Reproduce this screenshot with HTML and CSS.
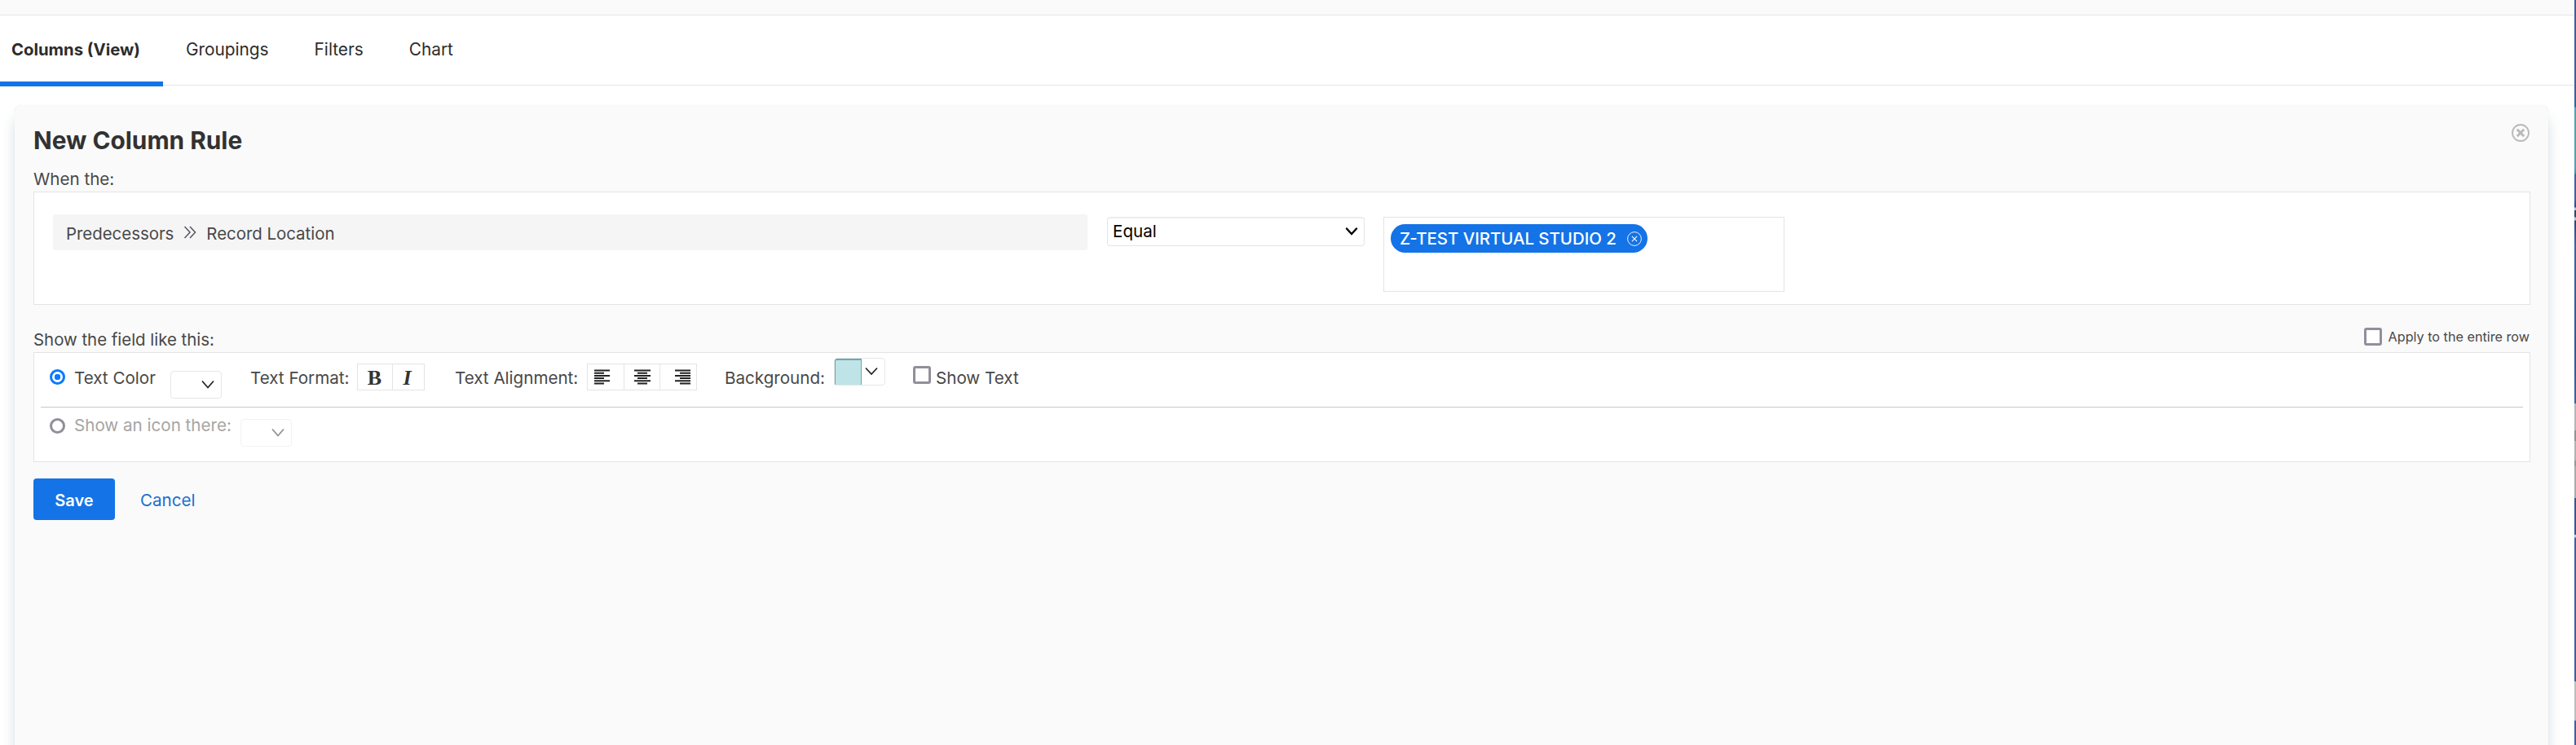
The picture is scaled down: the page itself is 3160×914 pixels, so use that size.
FILE: index.html
```html
<!DOCTYPE html>
<html lang="en">
<head>
    <meta charset="UTF-8">
    <title>New Column Rule</title>
    <link rel="stylesheet" href="styles.css">
</head>
<body>
  <div class="page">
    <div class="topbar"></div>
    <nav class="tabs">
      <a class="tab active">Columns (View)</a>
      <a class="tab">Groupings</a>
      <a class="tab">Filters</a>
      <a class="tab">Chart</a>
    </nav>

    <div class="card">
      <div class="card-header">
        <h2>New Column Rule</h2>
        <svg class="close" width="22" height="22" viewBox="0 0 22 22" fill="none" stroke="#b9b9b9">
          <circle cx="11" cy="11" r="10" stroke-width="1.8"/>
          <path d="M6.8 6.8l8.4 8.4M15.2 6.8l-8.4 8.4" stroke-width="3"/>
        </svg>
      </div>

      <div class="section-label">When the:</div>
      <div class="box condition">
        <div class="field">
          <span>Predecessors</span>
          <svg width="16" height="16" viewBox="0 0 16 16" fill="none" stroke="#55555f" stroke-width="1.5">
            <path d="M1.5 1l6.5 7-6.5 7M8 1l6.5 7L8 15"/>
          </svg>
          <span>Record Location</span>
        </div>
        <div class="select">
          <span>Equal</span>
          <svg width="16" height="12" viewBox="0 0 16 12" fill="none" stroke="#000" stroke-width="2.4" stroke-linecap="round">
            <path d="M2 2.5l6 6.5 6-6.5"/>
          </svg>
        </div>
        <div class="tokens">
          <div class="token">
            <span>Z-TEST VIRTUAL STUDIO 2</span>
            <svg width="18" height="18" viewBox="0 0 18 18" fill="none" stroke="#fff">
              <circle cx="9" cy="9" r="8.4" stroke-width="0.9"/>
              <path d="M5.9 5.9l6.2 6.2M12.1 5.9l-6.2 6.2" stroke-width="1.1"/>
            </svg>
          </div>
        </div>
      </div>

      <div class="section-row">
        <div class="section-label">Show the field like this:</div>
        <label class="apply"><span class="checkbox"></span>Apply to the entire row</label>
      </div>
      <div class="box format">
        <div class="format-row">
          <span class="radio checked"></span>
          <span class="label color-label">Text Color</span>
          <div class="dropdown low">
            <svg width="16" height="12" viewBox="0 0 16 12" fill="none" stroke="#222" stroke-width="1.7"><path d="M1 1.5l7 8 7-8"/></svg>
          </div>
          <span class="label format-label">Text Format:</span>
          <div class="btn-group">
            <span class="btn bold">B</span>
            <span class="btn italic">I</span>
          </div>
          <span class="label align-label">Text Alignment:</span>
          <div class="btn-group">
            <span class="btn al-left">
              <svg width="20" height="19" viewBox="0 0 20 19" stroke="#222" stroke-width="2"><path d="M0 1.5h19M0 4.7h12M0 7.9h19M0 11.1h12M0 14.3h19M0 17.5h12"/></svg>
            </span>
            <span class="btn al-center">
              <svg width="20" height="19" viewBox="0 0 20 19" stroke="#222" stroke-width="2"><path d="M0 1.5h20M4 4.7h12M0 7.9h20M4 11.1h12M0 14.3h20M4 17.5h12"/></svg>
            </span>
            <span class="btn al-right">
              <svg width="20" height="19" viewBox="0 0 20 19" stroke="#222" stroke-width="2"><path d="M1 1.5h19M7 4.7h13M1 7.9h19M7 11.1h13M1 14.3h19M7 17.5h13"/></svg>
            </span>
          </div>
          <span class="label bg-label">Background:</span>
          <div class="dropdown high">
            <span class="swatch"></span>
            <svg width="16" height="12" viewBox="0 0 16 12" fill="none" stroke="#222" stroke-width="1.7"><path d="M1 1.5l7 7.5 7-7.5"/></svg>
          </div>
          <span class="checkbox text-check"></span>
          <span class="label">Show Text</span>
        </div>
        <div class="format-row disabled">
          <span class="radio"></span>
          <span class="label icon-label">Show an icon there:</span>
          <div class="dropdown">
            <svg width="16" height="12" viewBox="0 0 16 12" fill="none" stroke="#222" stroke-width="1.7"><path d="M1 1.5l7 8 7-8"/></svg>
          </div>
        </div>
      </div>

      <div class="actions">
        <button class="save">Save</button>
        <a class="cancel">Cancel</a>
      </div>
    </div>
  </div>
  <div class="edge"></div>
</body>
</html>
```
FILE: styles.css
```css
* {
box-sizing: border-box;
}

body {
margin: 0;
display: flex;
height: 100vh;
overflow: hidden;
background-color: #fff;
font-family: Inter, sans-serif;
font-size: 20.6px;
line-height: 24px;
color: #484848;
}

svg {
display: block;
flex: none;
}

.page {
flex: 1;
display: flex;
flex-direction: column;
overflow: hidden;
}

/* strip of the desktop behind the window */
.edge {
width: 2px;
background: linear-gradient(#3b609b 0 120px, #2169a0 131px, #4fa3b5 132px 206px, #3f8fa5 213px, #3c62a3 214px 245px, #2d4677 254px, #b9c2d0 255px 258px, #2d4677 258px 266px, #b9c2d0 267px 270px, #2d4677 271px, #3b63a5 300px, #30589a 430px, #3c62a5 495px, #b7b5b5 495px 528px, #929292 528px 541px, #b3b1b1 541px 565px, #989898 565px 572px, #aaa 572px 611px, #335693 611px 656px, #c4ccd8 656px 659px, #3b609f 660px 836px, #bdbdbd 836px 884px, #3b609f 884px);
}

.topbar {
height: 19px;
flex: none;
background-color: #fafafa;
border-bottom: 1px solid #e6e6e6;
}

.tabs {
display: flex;
height: 86px;
flex: none;
border-bottom: 1px solid #e6e6e6;
}

.tab {
padding: 30px 28px 0;
font-size: 20.8px;
color: #2c2c2c;
}

.tab.active {
width: 200px;
height: 87px;
padding: 30px 0 0 14px;
border-bottom: 6px solid #1473e6;
font-size: 20.3px;
font-weight: 700;
position: relative;
}

.card {
flex: 1;
margin: 24px 32px 0 18px;
padding: 25px 22px 0 23px;
background-color: #fafafa;
border-radius: 8px 8px 0 0;
box-shadow: 0 0 1px rgba(0, 0, 0, 0.15), 0 16px 16px rgba(60, 85, 120, 0.2);
}

.card-header {
display: flex;
justify-content: space-between;
height: 36px;
}

.card-header h2 {
margin: 0;
font-size: 29.8px;
line-height: 36px;
color: #323232;
}

.close {
margin: -2px 1px 0 0;
}

.section-label {
margin: 18px 0 3px;
}

.section-row {
display: flex;
justify-content: space-between;
margin-top: 26px;
height: 32px;
}

.section-row .section-label {
margin: 5px 0 3px;
font-size: 20.4px;
}

.box {
background-color: #fff;
border: 1px solid #e4e4e4;
}

.condition {
display: flex;
align-items: flex-start;
height: 139px;
padding: 27px 0 0 23px;
}

.field {
display: flex;
align-items: center;
gap: 12px;
width: 1269px;
height: 44px;
padding: 3px 0 0 16px;
background-color: #f5f5f5;
border-radius: 3px;
font-size: 20.4px;
}

.field svg {
margin-top: -3px;
}

.select {
display: flex;
justify-content: space-between;
align-items: center;
width: 316px;
height: 36px;
margin: 3px 23px 0 24px;
padding: 0 7px 1px 6px;
border: 1px solid #e4e4e4;
border-top: 2px solid #ececec;
border-radius: 4px;
color: #000;
}

.tokens {
width: 492px;
height: 92px;
margin-top: 3px;
padding: 8px;
border: 1px solid #e4e4e4;
}

.token {
display: flex;
align-items: center;
justify-content: space-between;
width: 315px;
height: 35px;
padding: 0 7px 0 11px;
border-radius: 18px;
background-color: #1473e6;
color: #fff;
font-size: 20.4px;
font-weight: 500;
white-space: nowrap;
}

.apply {
display: flex;
margin: 2px 1px 0 0;
font-size: 16.2px;
line-height: 22px;
}

.checkbox {
flex: none;
width: 22px;
height: 22px;
border: 3px solid #918f9b;
border-radius: 3px;
background-color: #fff;
}

.apply .checkbox {
margin-right: 8px;
}

.format {
height: 135px;
padding: 0 8px;
}

.format-row {
display: flex;
align-items: flex-start;
height: 67px;
padding-left: 11px;
border-bottom: 1px solid #c8c8c8;
}

.format-row.disabled {
height: 66px;
border-bottom: none;
}

.radio {
width: 19px;
height: 19px;
margin: 20px 11px 0 0;
border: 3px solid #918f9b;
border-radius: 50%;
}

.radio.checked {
border-color: #0a7aff;
background: radial-gradient(circle, #0a7aff 3.5px, #fff 4px);
}

.label {
margin-top: 18.5px;
white-space: nowrap;
}

.color-label {
width: 118px;
}

.format-label {
width: 131px;
margin-left: 35px;
}

.align-label {
width: 162px;
margin-left: 37px;
}

.bg-label {
width: 134px;
margin-left: 34px;
}

.icon-label {
width: 203px;
}

.dropdown {
display: flex;
align-items: center;
justify-content: flex-end;
width: 63px;
height: 34px;
padding-right: 8px;
border: 1px solid #e6e6e6;
border-radius: 4px;
}

.dropdown.low {
margin-top: 22px;
}

.dropdown.high {
justify-content: space-between;
margin-top: 6px;
}

.swatch {
width: 33px;
height: 32px;
border: 1px solid #6aa9b0;
border-top-width: 2px;
border-bottom: none;
border-radius: 3px 0 0 0;
background-color: #bfe4e7;
}

.btn-group {
display: flex;
height: 33px;
margin-top: 13px;
border: 1px solid #e4e4e4;
}

.btn {
display: flex;
align-items: center;
justify-content: center;
border-left: 1px solid #e4e4e4;
}

.btn:first-child {
border-left: none;
}

.bold {
width: 42px;
padding: 2px 1px 0 0;
font: bold 26px "Liberation Serif", serif;
color: #333;
}

.italic {
width: 39px;
padding: 2px 3px 0 0;
font: italic bold 26px "Liberation Serif", serif;
color: #333;
}

.al-left {
width: 44px;
padding-right: 8px;
}

.al-center {
width: 44px;
}

.al-right {
width: 45px;
padding-left: 9px;
}

.text-check {
margin: 16px 6px 0 34px;
}

.disabled .radio {
margin-top: 13px;
}

.disabled .label {
margin-top: 10px;
color: #a5a5a5;
}

.disabled .dropdown {
margin: 14px 0 0 1px;
opacity: 0.5;
}

.actions {
display: flex;
align-items: center;
margin-top: 20px;
}

.save {
width: 100px;
height: 51px;
padding: 2px 0 0;
border: none;
border-radius: 4px;
background-color: #1473e6;
color: #fff;
font: 600 20px Inter, sans-serif;
}

.cancel {
margin: 2px 0 0 31px;
color: #1b6fcf;
}
```
